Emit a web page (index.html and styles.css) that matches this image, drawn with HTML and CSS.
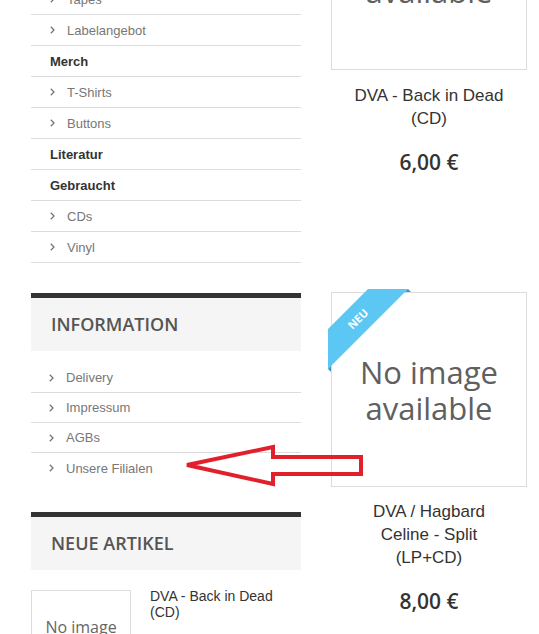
FILE: index.html
```html
<!DOCTYPE html>
<html lang="de">

<head>
    <meta charset="UTF-8">
    <meta name="viewport" content="width=device-width, initial-scale=1.0">
    <title>Shop</title>
    <link rel="stylesheet" href="styles.css">
</head>

<body>
    <div class="page">
        <div class="sidebar">
            <ul class="cat_list">
                <li class="link"><span class="chev"><svg width="5" height="8" viewBox="0 0 5 8"><polyline points="0.8,0.8 4,4 0.8,7.2" /></svg></span>Tapes</li>
                <li class="link"><span class="chev"><svg width="5" height="8" viewBox="0 0 5 8"><polyline points="0.8,0.8 4,4 0.8,7.2" /></svg></span>Labelangebot</li>
                <li class="head">Merch</li>
                <li class="link"><span class="chev"><svg width="5" height="8" viewBox="0 0 5 8"><polyline points="0.8,0.8 4,4 0.8,7.2" /></svg></span>T-Shirts</li>
                <li class="link"><span class="chev"><svg width="5" height="8" viewBox="0 0 5 8"><polyline points="0.8,0.8 4,4 0.8,7.2" /></svg></span>Buttons</li>
                <li class="head">Literatur</li>
                <li class="head">Gebraucht</li>
                <li class="link"><span class="chev"><svg width="5" height="8" viewBox="0 0 5 8"><polyline points="0.8,0.8 4,4 0.8,7.2" /></svg></span>CDs</li>
                <li class="link"><span class="chev"><svg width="5" height="8" viewBox="0 0 5 8"><polyline points="0.8,0.8 4,4 0.8,7.2" /></svg></span>Vinyl</li>
            </ul>

            <div class="block">
                <h3 class="block_title">Information</h3>
                <ul class="info_list">
                    <li><span class="chev"><svg width="5" height="8" viewBox="0 0 5 8"><polyline points="0.8,0.8 4,4 0.8,7.2" /></svg></span>Delivery</li>
                    <li><span class="chev"><svg width="5" height="8" viewBox="0 0 5 8"><polyline points="0.8,0.8 4,4 0.8,7.2" /></svg></span>Impressum</li>
                    <li><span class="chev"><svg width="5" height="8" viewBox="0 0 5 8"><polyline points="0.8,0.8 4,4 0.8,7.2" /></svg></span>AGBs</li>
                    <li><span class="chev"><svg width="5" height="8" viewBox="0 0 5 8"><polyline points="0.8,0.8 4,4 0.8,7.2" /></svg></span>Unsere Filialen</li>
                </ul>
            </div>

            <div class="block block_new">
                <h3 class="block_title">Neue Artikel</h3>
                <div class="mini_product">
                    <div class="mini_img">No image available</div>
                    <div class="mini_name">DVA - Back in Dead (CD)</div>
                </div>
            </div>
        </div>

        <div class="products">
            <div class="product">
                <div class="product_img">No image available</div>
                <div class="product_name">DVA - Back in Dead (CD)</div>
                <div class="product_price">6,00 €</div>
            </div>
            <div class="product product2">
                <div class="product_img">
                    No image available
                    <svg class="ribbon" width="84" height="84" viewBox="-4 -4 84 84">
                        <polygon points="37,-3 77,-3 -3,77 -3,37" fill="#5cc7f3" />
                        <polygon points="77,-3 80,0 74,0" fill="#3b95bf" />
                        <polygon points="-3,77 0,80 0,74" fill="#3b95bf" />
                        <text x="27" y="31" transform="rotate(-45 27 27)" text-anchor="middle">NEU</text>
                    </svg>
                </div>
                <div class="product_name">DVA / Hagbard Celine - Split (LP+CD)</div>
                <div class="product_price">8,00 €</div>
            </div>
        </div>
    </div>

    <svg class="arrow" width="539" height="634" viewBox="0 0 539 634">
        <polygon points="187,465 273,447 273,457 361,457 361,474 273,474 273,484" />
    </svg>
</body>

</html>
```

FILE: styles.css
```css
* {
    padding: 0;
    margin: 0;
    box-sizing: border-box;
}

ul,
li {
    list-style: none;
}

body {
    background: #fff;
    font-family: "Liberation Sans", Arial, sans-serif;
    overflow: hidden;
}

.page {
    display: flex;
    align-items: flex-start;
    gap: 30px;
    padding-left: 31px;
    margin-top: -16px;
}

.sidebar {
    width: 270px;
    flex-shrink: 0;
}

.cat_list>li {
    height: 31px;
    border-bottom: 1px solid #dcdcdc;
    padding-left: 19px;
    display: flex;
    align-items: center;
    font-size: 13px;
}

.cat_list>li.link {
    color: #777;
}

.cat_list>li.head {
    color: #333;
    font-weight: bold;
}

.chev {
    display: inline-flex;
    width: 5px;
    margin-right: 12px;
}

.chev polyline {
    fill: none;
    stroke: #777;
    stroke-width: 1.3;
}

.block {
    margin-top: 30px;
}

.block_new {
    margin-top: 29px;
}

.block_title {
    border-top: 5px solid #333;
    background: #f5f5f5;
    height: 58px;
    padding-left: 20px;
    padding-bottom: 2px;
    display: flex;
    align-items: center;
    font-family: "Open Sans", sans-serif;
    font-weight: 600;
    font-size: 18px;
    color: #555;
    text-transform: uppercase;
}

.info_list {
    padding-top: 12px;
}

.info_list>li {
    height: 30px;
    border-bottom: 1px solid #dcdcdc;
    padding-left: 18px;
    display: flex;
    align-items: center;
    font-size: 13px;
    color: #777;
}

.info_list>li:last-child {
    border-bottom: none;
}

.mini_product {
    display: flex;
    gap: 19px;
    padding-top: 20px;
}

.mini_img {
    width: 100px;
    height: 100px;
    flex-shrink: 0;
    border: 1px solid #dcdcdc;
    display: flex;
    align-items: center;
    justify-content: center;
    text-align: center;
    padding: 0 6px 6px;
    font-family: "Open Sans", sans-serif;
    font-size: 16px;
    line-height: 19px;
    color: #666;
}

.mini_name {
    font-size: 14px;
    line-height: 16px;
    color: #333;
    margin-top: -2px;
}

.products {
    width: 196px;
    flex-shrink: 0;
    margin-top: -109px;
}

.product {
    text-align: center;
}

.product2 {
    margin-top: 116px;
}

.product2 .product_name {
    margin-top: 13px;
}

.product_img {
    position: relative;
    height: 195px;
    border: 1px solid #dcdcdc;
    display: flex;
    align-items: center;
    justify-content: center;
    padding: 0 20px;
    font-family: "Open Sans", sans-serif;
    font-size: 31px;
    line-height: 36px;
    color: #606060;
}

.ribbon {
    position: absolute;
    left: -5px;
    top: -5px;
}

.ribbon text {
    fill: #fff;
    font-family: "Open Sans", sans-serif;
    font-weight: 700;
    font-size: 11px;
}

.product_name {
    margin-top: 14px;
    padding: 0 18px;
    font-size: 17px;
    line-height: 23px;
    color: #333;
}

.product_price {
    margin-top: 18px;
    font-family: "Open Sans", sans-serif;
    font-weight: 600;
    font-size: 21px;
    line-height: 28px;
    color: #333;
}

.arrow {
    position: absolute;
    left: 0;
    top: 0;
    pointer-events: none;
}

.arrow polygon {
    fill: none;
    stroke: #e2202b;
    stroke-width: 4;
    stroke-linejoin: miter;
}
```
